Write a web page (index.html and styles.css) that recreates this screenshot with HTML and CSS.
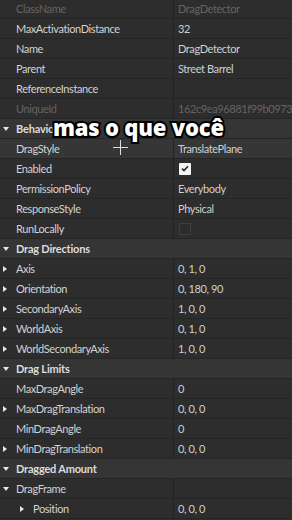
FILE: index.html
```html
<!DOCTYPE html>
<html>
<head>
<meta charset="utf-8">
<link rel="stylesheet" href="styles.css">
</head>
<body>
<div class="panel">
  <div class="row"><div class="name dim">ClassName</div><div class="val dim">DragDetector</div></div>
  <div class="row"><div class="name">MaxActivationDistance</div><div class="val">32</div></div>
  <div class="row"><div class="name">Name</div><div class="val">DragDetector</div></div>
  <div class="row"><div class="name">Parent</div><div class="val">Street Barrel</div></div>
  <div class="row"><div class="name">ReferenceInstance</div><div class="val"></div></div>
  <div class="row"><div class="name dim">UniqueId</div><div class="val dim">162c9ea96881f99b097301</div></div>
  <div class="head"><span class="tri down"></span>Behavior</div>
  <div class="row hover"><div class="name">DragStyle</div><div class="val">TranslatePlane</div></div>
  <div class="row"><div class="name">Enabled</div><div class="val"><span class="check on"><svg width="8" height="7" viewBox="0 0 8 7"><path d="M1 3.6 L3 5.6 L7 1.2" fill="none" stroke="#222" stroke-width="1.5"/></svg></span></div></div>
  <div class="row"><div class="name">PermissionPolicy</div><div class="val">Everybody</div></div>
  <div class="row"><div class="name">ResponseStyle</div><div class="val">Physical</div></div>
  <div class="row"><div class="name">RunLocally</div><div class="val"><span class="check off"></span></div></div>
  <div class="head"><span class="tri down"></span>Drag Directions</div>
  <div class="row"><div class="name"><span class="tri right"></span>Axis</div><div class="val">0, 1, 0</div></div>
  <div class="row"><div class="name"><span class="tri right"></span>Orientation</div><div class="val">0, 180, 90</div></div>
  <div class="row"><div class="name"><span class="tri right"></span>SecondaryAxis</div><div class="val">1, 0, 0</div></div>
  <div class="row"><div class="name"><span class="tri right"></span>WorldAxis</div><div class="val">0, 1, 0</div></div>
  <div class="row"><div class="name"><span class="tri right"></span>WorldSecondaryAxis</div><div class="val">1, 0, 0</div></div>
  <div class="head"><span class="tri down"></span>Drag Limits</div>
  <div class="row"><div class="name">MaxDragAngle</div><div class="val">0</div></div>
  <div class="row"><div class="name"><span class="tri right"></span>MaxDragTranslation</div><div class="val">0, 0, 0</div></div>
  <div class="row"><div class="name">MinDragAngle</div><div class="val">0</div></div>
  <div class="row"><div class="name"><span class="tri right"></span>MinDragTranslation</div><div class="val">0, 0, 0</div></div>
  <div class="head"><span class="tri down"></span>Dragged Amount</div>
  <div class="row"><div class="name"><span class="tri down small"></span>DragFrame</div><div class="val"></div></div>
  <div class="row"><div class="name sub"><span class="tri right sub"></span>Position</div><div class="val">0, 0, 0</div></div>
  <div class="caption">mas o que você</div>
  <div class="cursor"></div>
</div>
</body>
</html>
```
FILE: styles.css
```css
html, body { margin: 0; padding: 0; background: #2d2d2d; }
body { width: 292px; height: 520px; overflow: hidden; font-family: "Lato", "Noto Sans", sans-serif; font-size: 11px; letter-spacing: -0.4px; }
.panel { position: relative; margin-top: -1px; display: flex; flex-direction: column; }
.row { height: 20px; display: grid; grid-template-columns: 174px 1fr; border-bottom: 1px solid #252525; box-sizing: border-box; background: #2d2d2d; }
.row.hover { background: #363636; }
.name { position: relative; padding-left: 16px; display: flex; align-items: center; color: #d2d2d2; border-right: 1px solid #232323; white-space: nowrap; }
.name.sub { padding-left: 33px; }
.val { padding-left: 4px; display: flex; align-items: center; color: #cfcfcf; white-space: nowrap; overflow: hidden; }
.dim { color: #646464; }
.head { position: relative; height: 20px; box-sizing: border-box; background: #353535; border-bottom: 1px solid #252525; color: #dcdcdc; font-weight: 700; padding-left: 16px; display: flex; align-items: center; letter-spacing: -0.2px; }
.tri { position: absolute; width: 0; height: 0; }
.tri.down { left: 3px; top: 8px; border-left: 3px solid transparent; border-right: 3px solid transparent; border-top: 4px solid #e8e8e8; }
.tri.right { left: 3px; top: 7px; border-top: 3px solid transparent; border-bottom: 3px solid transparent; border-left: 4px solid #e8e8e8; }
.tri.right.sub { left: 20px; }
.check { width: 12px; height: 12px; box-sizing: border-box; display: inline-flex; align-items: center; justify-content: center; margin-left: 1px; }
.check.on { background: #f4f4f4; border-radius: 1px; }
.check.off { background: #2c2c2c; border: 1px solid #3e3e3e; }
.caption { position: absolute; left: 53px; top: 114px; font-family: "Open Sans", sans-serif; font-weight: 800; font-size: 22px; letter-spacing: -0.2px; color: #fff; -webkit-text-stroke: 4px #000; paint-order: stroke fill; white-space: nowrap; line-height: 28px; }
.cursor { position: absolute; left: 113px; top: 141px; width: 15px; height: 15px; }
.cursor::before { content: ""; position: absolute; left: 7px; top: 0; width: 1px; height: 15px; background: #ddd; }
.cursor::after { content: ""; position: absolute; left: 0; top: 7px; width: 15px; height: 1px; background: #ddd; }
```
